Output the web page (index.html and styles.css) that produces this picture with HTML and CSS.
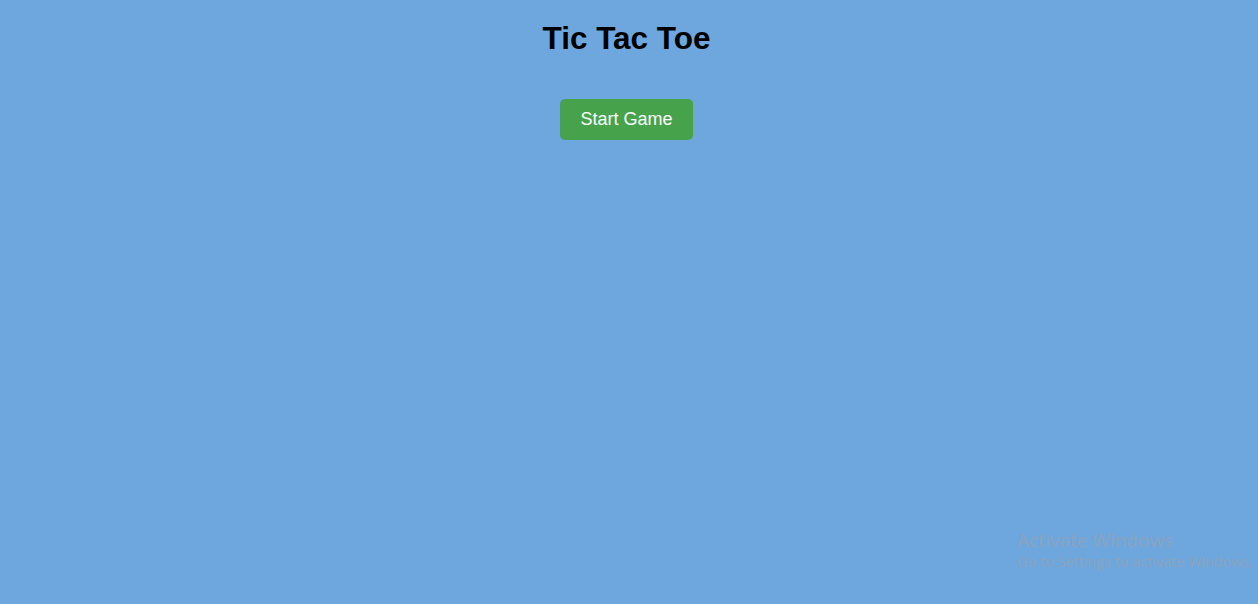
FILE: index.html
```html
<!DOCTYPE html>
<html>
<head>
<meta charset="utf-8">
<title>Tic Tac Toe</title>
<link rel="stylesheet" href="styles.css">
</head>
<body>
<div class="game">
  <h1 class="title">Tic Tac Toe</h1>
  <button class="start-btn">Start Game</button>
</div>
<div class="watermark">
  <div class="wm-title">Activate Windows</div>
  <div class="wm-sub">Go to Settings to activate Windows.</div>
</div>
</body>
</html>
```
FILE: styles.css
```css
html, body {
  height: 100%;
}
body {
  margin: 0;
  background: #6ea7dd;
  font-family: "Liberation Sans", Arial, sans-serif;
  overflow: hidden;
}
.game {
  display: flex;
  flex-direction: column;
  align-items: center;
  padding: 7px 5px 0 0;
}
.title {
  font-size: 31.5px;
  font-weight: bold;
  color: #000;
  margin: 13px 0 22px;
}
.start-btn {
  margin-top: 20px;
  background: #46a34b;
  color: #fff;
  border: none;
  border-radius: 5px;
  padding: 10px 20px;
  font-family: "Liberation Sans", Arial, sans-serif;
  font-size: 18px;
  cursor: pointer;
}
.watermark {
  position: absolute;
  left: 1017px;
  top: 528px;
  color: #8fa3b9;
  font-family: "Open Sans", "Noto Sans", sans-serif;
  opacity: 0.85;
}
.wm-title {
  font-size: 19px;
  line-height: 24px;
}
.wm-sub {
  font-size: 14.4px;
  line-height: 20px;
}
```
